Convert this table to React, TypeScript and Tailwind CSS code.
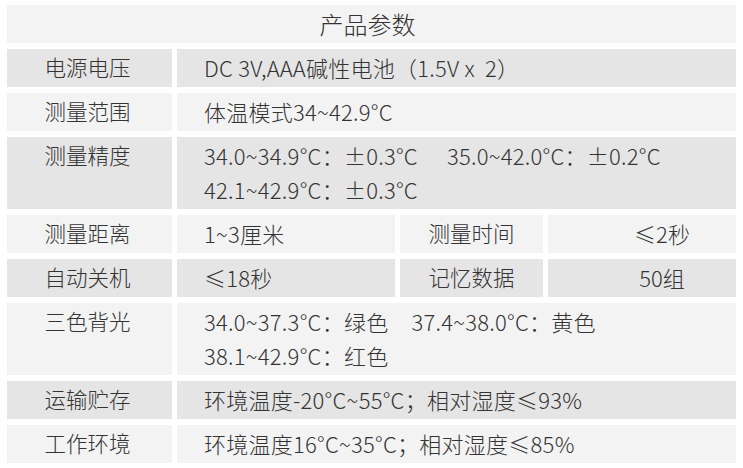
import React from 'react';

const FONT = { fontFamily: '"Noto Sans CJK SC", "Noto Sans", sans-serif' };

const LIGHT = 'bg-[#f3f3f3]';
const DARK = 'bg-[#e5e5e5]';

type Row = { label: string; lines: React.ReactNode[]; tone: string };

const rows: Row[] = [
  { label: '电源电压', lines: ['DC 3V,AAA碱性电池（1.5V x\u00a0 2）'], tone: DARK },
  { label: '测量范围', lines: ['体温模式34~42.9°C'], tone: LIGHT },
  {
    label: '测量精度',
    lines: [
      <>
        34.0~34.9°C：±0.3°C<span className="ml-[29px]">35.0~42.0°C：±0.2°C</span>
      </>,
      '42.1~42.9°C：±0.3°C',
    ],
    tone: DARK,
  },
];

const rowsAfter: Row[] = [
  {
    label: '三色背光',
    lines: [
      <>
        34.0~37.3°C：绿色<span className="ml-[23px]">37.4~38.0°C：黄色</span>
      </>,
      '38.1~42.9°C：红色',
    ],
    tone: LIGHT,
  },
  { label: '运输贮存', lines: ['环境温度-20°C~55°C；相对湿度≤93%'], tone: DARK },
  { label: '工作环境', lines: ['环境温度16°C~35°C；相对湿度≤85%'], tone: LIGHT },
];

const cell = 'pt-[1px] pb-[3px] leading-[34px]';
const label = `${cell} pr-[4px] text-center text-[21.5px]`;
const value = `${cell} pl-[27px] text-[22px] tracking-[0.25px]`;

function SpecRow({ row }: { row: Row }) {
  return (
    <>
      <div className={`${row.tone} ${label}`}>{row.label}</div>
      <div className={`${row.tone} ${value} col-span-3`}>
        {row.lines.map((l, i) => (
          <div key={i}>{l}</div>
        ))}
      </div>
    </>
  );
}

export default function App() {
  return (
    <div className="min-h-[468px] bg-white px-[7px] pt-[5px] font-light text-[#333]" style={FONT}>
      <div className="grid grid-cols-[165px_218px_143px_1fr] gap-x-[5px] gap-y-[6px]">
        <div className={`${LIGHT} col-span-4 pr-[8px] text-center text-[24px] leading-[38px]`}>产品参数</div>

        {rows.map((r) => (
          <SpecRow key={r.label} row={r} />
        ))}

        {/* two-pair rows */}
        <div className={`${LIGHT} ${label}`}>测量距离</div>
        <div className={`${LIGHT} ${value}`}>1~3厘米</div>
        <div className={`${LIGHT} ${cell} text-center text-[21.5px]`}>测量时间</div>
        <div className={`${LIGHT} ${cell} pl-[40px] text-center text-[22px]`}>≤2秒</div>

        <div className={`${DARK} ${label}`}>自动关机</div>
        <div className={`${DARK} ${value}`}>≤18秒</div>
        <div className={`${DARK} ${cell} text-center text-[21.5px]`}>记忆数据</div>
        <div className={`${DARK} ${cell} pl-[40px] text-center text-[22px]`}>50组</div>

        {rowsAfter.map((r) => (
          <SpecRow key={r.label} row={r} />
        ))}
      </div>
    </div>
  );
}
